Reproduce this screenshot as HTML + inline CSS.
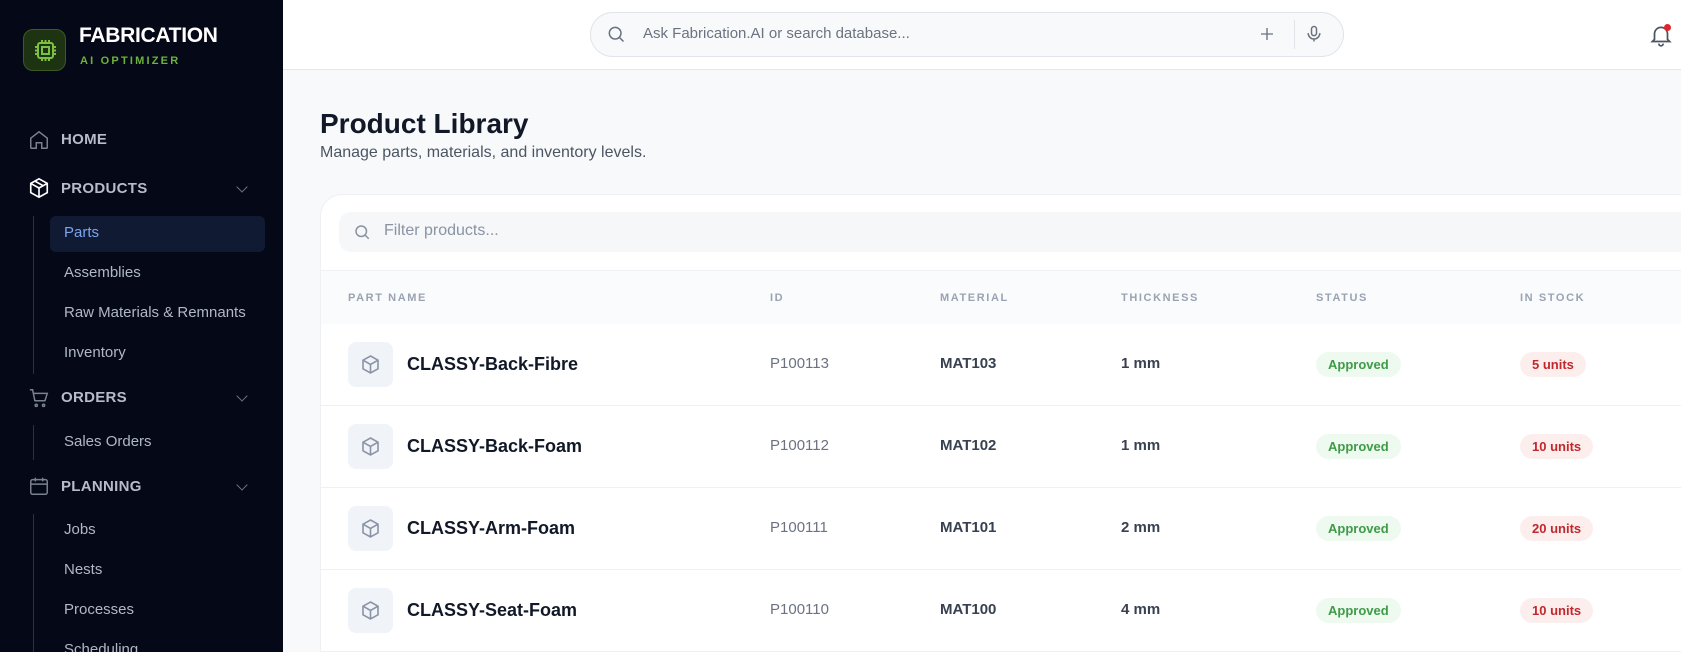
<!DOCTYPE html>
<html><head><meta charset="utf-8"><style>
*{box-sizing:border-box;margin:0;padding:0}
html{width:1681px;height:652px;overflow:hidden}
body{width:1681px;height:652px;overflow:hidden;font-family:"Liberation Sans",sans-serif;background:#f8f9fb;position:relative}
.sb{position:absolute;left:0;top:0;width:283px;height:652px;background:#050817;overflow:hidden}
.abs{position:absolute}
.logo{left:23px;top:29px;width:43px;height:42px;border-radius:10px;background:#1d3312;border:1px solid #3c5a22}
.nav{position:absolute;left:61px;font-size:15px;font-weight:bold;color:#b6bdc9;letter-spacing:.3px}
.sub{position:absolute;left:64px;font-size:15px;color:#b0b8c5}
.vl{position:absolute;left:33px;width:1px;background:#2a3142}
.chev{position:absolute;left:238px;width:8px;height:8px;border-right:1.3px solid #6b7384;border-bottom:1.3px solid #6b7384;transform:rotate(45deg)}
.hdr{position:absolute;left:283px;top:0;right:0;height:70px;background:#fff;border-bottom:1px solid #e3e6eb}
.card{position:absolute;left:320px;top:194px;width:1400px;height:458px;background:#fff;border:1px solid #eef0f3;border-bottom:none;border-radius:22px 22px 0 0}
.th{position:absolute;top:292px;font-size:11px;font-weight:bold;color:#9aa3b3;letter-spacing:1.6px}
.row{position:absolute;left:321px;width:1360px;height:82px;border-bottom:1px solid #eef0f3}
.ib{position:absolute;left:27px;top:18px;width:45px;height:45px;border-radius:8px;background:#f0f3f8}
.nm{position:absolute;left:86px;top:30px;font-size:18px;font-weight:bold;color:#111827}
.c{position:absolute;top:31px;font-size:15px;color:#1f2937}
.id{color:#6b7280}
.b{font-weight:bold;color:#374151}
.pill{position:absolute;top:28px;height:25px;border-radius:13px;font-size:13px;font-weight:bold;padding:5px 12px}
.ap{left:995px;background:#eefaf0;color:#3e9b47}
.un{left:1199px;background:#fdeeee;color:#c0282d}
</style></head><body>
<div class="sb">
 <div class="abs logo"><svg width="43" height="42" viewBox="0 0 43 42"><g fill="none" stroke="#7bc043" stroke-width="2"><rect x="14" y="13" width="15" height="15" rx="2"/><rect x="18" y="17" width="7" height="7"/><path d="M18 10v3M21.5 10v3M25 10v3M18 28v3M21.5 28v3M25 28v3M11 17h3M11 20.5h3M11 24h3M29 17h3M29 20.5h3M29 24h3"/></g></svg></div>
 <div class="abs" style="left:79px;top:24px;font-size:21px;font-weight:bold;color:#fff;letter-spacing:-.3px">FABRICATION</div>
 <div class="abs" style="left:80px;top:55px;font-size:11px;font-weight:bold;color:#6bb33a;letter-spacing:2.2px">AI OPTIMIZER</div>
 <svg class="abs" style="left:28px;top:129px" width="22" height="22" viewBox="0 0 24 24" fill="none" stroke="#7a8292" stroke-width="1.6"><path d="M3 10l9-7 9 7v10a1 1 0 0 1-1 1h-5v-6H9v6H4a1 1 0 0 1-1-1z"/></svg>
 <div class="nav" style="top:131px">HOME</div>
 <svg class="abs" style="left:28px;top:177px" width="22" height="22" viewBox="0 0 24 24" fill="none" stroke="#fff" stroke-width="1.8"><path d="M12 2l9 5v10l-9 5-9-5V7z M3 7l9 5 9-5 M12 12v10 M7.5 4.5l9 5"/></svg>
 <div class="nav" style="top:180px">PRODUCTS</div><div class="chev" style="top:183px"></div>
 <div class="vl" style="top:216px;height:158px"></div>
 <div class="abs" style="left:50px;top:216px;width:215px;height:36px;background:#111a33;border-radius:6px"></div>
 <div class="sub" style="top:224px;color:#7aa5f0">Parts</div>
 <div class="sub" style="top:264px">Assemblies</div>
 <div class="sub" style="top:304px">Raw Materials &amp; Remnants</div>
 <div class="sub" style="top:344px">Inventory</div>
 <svg class="abs" style="left:28px;top:387px" width="22" height="22" viewBox="0 0 24 24" fill="none" stroke="#7a8292" stroke-width="1.6"><path d="M2 3h3l2.5 12h11L21 7H6"/><circle cx="9" cy="20" r="1.2"/><circle cx="17" cy="20" r="1.2"/></svg>
 <div class="nav" style="top:389px">ORDERS</div><div class="chev" style="top:392px"></div>
 <div class="vl" style="top:425px;height:35px"></div>
 <div class="sub" style="top:433px">Sales Orders</div>
 <svg class="abs" style="left:28px;top:475px" width="22" height="22" viewBox="0 0 24 24" fill="none" stroke="#7a8292" stroke-width="1.6"><rect x="3" y="5" width="18" height="16" rx="2"/><path d="M3 10h18M8 3v4M16 3v4"/></svg>
 <div class="nav" style="top:478px">PLANNING</div><div class="chev" style="top:481px"></div>
 <div class="vl" style="top:514px;height:140px"></div>
 <div class="sub" style="top:521px">Jobs</div>
 <div class="sub" style="top:561px">Nests</div>
 <div class="sub" style="top:601px">Processes</div>
 <div class="sub" style="top:641px">Scheduling</div>
</div>
<div class="hdr"></div>
<div class="abs" style="left:590px;top:12px;width:754px;height:45px;border:1px solid #e1e4e9;border-radius:23px;background:#f8f9fb"></div>
<svg class="abs" style="left:606px;top:24px" width="20" height="20" viewBox="0 0 24 24" fill="none" stroke="#6b7280" stroke-width="1.8"><circle cx="11" cy="11" r="7"/><path d="M16 16l5 5"/></svg>
<div class="abs" style="left:643px;top:25px;font-size:15px;color:#6b7280">Ask Fabrication.AI or search database...</div>
<svg class="abs" style="left:1258px;top:25px" width="18" height="18" viewBox="0 0 24 24" stroke="#6b7280" stroke-width="1.8"><path d="M12 4v16M4 12h16"/></svg>
<div class="abs" style="left:1294px;top:20px;width:1px;height:29px;background:#e1e4e9"></div>
<svg class="abs" style="left:1304px;top:23px" width="20" height="22" viewBox="0 0 24 24" fill="none" stroke="#6b7280" stroke-width="1.8"><rect x="9" y="3" width="6" height="11" rx="3"/><path d="M5 11a7 7 0 0 0 14 0M12 18v3"/></svg>
<svg class="abs" style="left:1648px;top:22px" width="26" height="26" viewBox="0 0 24 24" fill="none" stroke="#4b5563" stroke-width="1.6"><path d="M6 16V11a6 6 0 0 1 12 0v5l2 2H4z M10 20a2 2 0 0 0 4 0"/></svg>
<div class="abs" style="left:1664px;top:24px;width:7px;height:7px;border-radius:50%;background:#e0262b"></div>
<div class="abs" style="left:320px;top:108px;font-size:28px;font-weight:bold;color:#111827">Product Library</div>
<div class="abs" style="left:320px;top:144px;font-size:16px;color:#4b5563">Manage parts, materials, and inventory levels.</div>
<div class="card"></div>
<div class="abs" style="left:339px;top:212px;width:1400px;height:40px;background:#f6f7f9;border-radius:12px"></div>
<svg class="abs" style="left:353px;top:223px" width="18" height="18" viewBox="0 0 24 24" fill="none" stroke="#8a93a3" stroke-width="2"><circle cx="11" cy="11" r="7"/><path d="M16 16l5 5"/></svg>
<div class="abs" style="left:384px;top:222px;font-size:16px;color:#8a93a3">Filter products...</div>
<div class="abs" style="left:321px;top:270px;width:1360px;height:54px;background:#fafbfc;border-top:1px solid #eef0f3"></div>
<div class="th" style="left:348px">PART NAME</div><div class="th" style="left:770px">ID</div><div class="th" style="left:940px">MATERIAL</div><div class="th" style="left:1121px">THICKNESS</div><div class="th" style="left:1316px">STATUS</div><div class="th" style="left:1520px">IN STOCK</div>

<div class="row" style="top:324px;background:#fff"><div class="ib"><svg width="45" height="45" viewBox="0 0 45 45" fill="none" stroke="#8a94a6" stroke-width="1.6"><path d="M22.5 14l7.5 4.2v8.6l-7.5 4.2-7.5-4.2v-8.6z M15 18.2l7.5 4.3 7.5-4.3 M22.5 22.5v8.5"/></svg></div><div class="nm">CLASSY-Back-Fibre</div><div class="c id" style="left:449px">P100113</div><div class="c b" style="left:619px">MAT103</div><div class="c b" style="left:800px">1 mm</div><div class="pill ap">Approved</div><div class="pill un">5 units</div></div>
<div class="row" style="top:406px;background:#fff"><div class="ib"><svg width="45" height="45" viewBox="0 0 45 45" fill="none" stroke="#8a94a6" stroke-width="1.6"><path d="M22.5 14l7.5 4.2v8.6l-7.5 4.2-7.5-4.2v-8.6z M15 18.2l7.5 4.3 7.5-4.3 M22.5 22.5v8.5"/></svg></div><div class="nm">CLASSY-Back-Foam</div><div class="c id" style="left:449px">P100112</div><div class="c b" style="left:619px">MAT102</div><div class="c b" style="left:800px">1 mm</div><div class="pill ap">Approved</div><div class="pill un">10 units</div></div>
<div class="row" style="top:488px;background:#fff"><div class="ib"><svg width="45" height="45" viewBox="0 0 45 45" fill="none" stroke="#8a94a6" stroke-width="1.6"><path d="M22.5 14l7.5 4.2v8.6l-7.5 4.2-7.5-4.2v-8.6z M15 18.2l7.5 4.3 7.5-4.3 M22.5 22.5v8.5"/></svg></div><div class="nm">CLASSY-Arm-Foam</div><div class="c id" style="left:449px">P100111</div><div class="c b" style="left:619px">MAT101</div><div class="c b" style="left:800px">2 mm</div><div class="pill ap">Approved</div><div class="pill un">20 units</div></div>
<div class="row" style="top:570px;background:#fff"><div class="ib"><svg width="45" height="45" viewBox="0 0 45 45" fill="none" stroke="#8a94a6" stroke-width="1.6"><path d="M22.5 14l7.5 4.2v8.6l-7.5 4.2-7.5-4.2v-8.6z M15 18.2l7.5 4.3 7.5-4.3 M22.5 22.5v8.5"/></svg></div><div class="nm">CLASSY-Seat-Foam</div><div class="c id" style="left:449px">P100110</div><div class="c b" style="left:619px">MAT100</div><div class="c b" style="left:800px">4 mm</div><div class="pill ap">Approved</div><div class="pill un">10 units</div></div>
</body></html>
